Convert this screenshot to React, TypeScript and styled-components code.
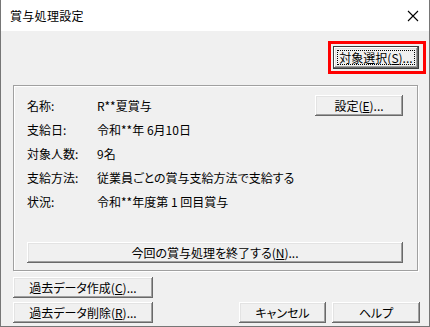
import React from "react";
import styled, { createGlobalStyle } from "styled-components";

const rows = [
  { label: "名称:", value: "R**夏賞与" },
  { label: "支給日:", value: "令和**年 6月10日" },
  { label: "対象人数:", value: "9名" },
  { label: "支給方法:", value: "従業員ごとの賞与支給方法で支給する" },
  { label: "状況:", value: "令和**年度第 1 回目賞与" },
];

function App() {
  return (
    <>
      <GlobalStyle />
      <Window>
        <TitleBar>
          <Title>賞与処理設定</Title>
          <CloseIcon width="12" height="12" viewBox="0 0 12 12">
            <path d="M1 1L11 11M11 1L1 11" stroke="#000" strokeWidth="1.1" />
          </CloseIcon>
        </TitleBar>
        <Body>
          <TopRow>
            <Highlight>
              <Button $default $width={86} $height={23}>
                <FocusRing>
                  対象選択(<u>S</u>)...
                </FocusRing>
              </Button>
            </Highlight>
          </TopRow>

          <GroupBox>
            <InfoList>
              {rows.map((row, i) => (
                <InfoRow key={row.label}>
                  <Label>{row.label}</Label>
                  <Value>{row.value}</Value>
                  {i === 0 && (
                    <Button $width={88} $height={21}>
                      設定(<u>E</u>)...
                    </Button>
                  )}
                </InfoRow>
              ))}
            </InfoList>
            <Button $width={376} $height={21}>
              今回の賞与処理を終了する(<u>N</u>)...
            </Button>
          </GroupBox>

          <Footer>
            <ButtonColumn>
              <Button $width={140} $height={21}>
                過去データ作成(<u>C</u>)...
              </Button>
              <Button $width={140} $height={21}>
                過去データ削除(<u>R</u>)...
              </Button>
            </ButtonColumn>
            <ButtonRow>
              <Button $width={87} $height={21}>
                キャンセル
              </Button>
              <Button $width={88} $height={21}>
                ヘルプ
              </Button>
            </ButtonRow>
          </Footer>
        </Body>
      </Window>
    </>
  );
}

export default App;

const GlobalStyle = createGlobalStyle`
  html, body {
    margin: 0;
    padding: 0;
    background: #ffffff;
  }
  body {
    font-family: "Noto Sans CJK JP", "Noto Sans", sans-serif;
    font-size: 12px;
    color: #000;
  }
`;

const Window = styled.div`
  box-sizing: border-box;
  width: 430px;
  height: 327px;
  border: 1px solid #767676;
  border-top: none;
  display: flex;
  flex-direction: column;
  background: #f0f0f0;
`;

const TitleBar = styled.div`
  height: 31px;
  flex: none;
  background: #ffffff;
  display: flex;
  align-items: center;
  justify-content: space-between;
  padding: 0 9px 0 9px;
`;

const Title = styled.span`
  font-size: 12px;
  letter-spacing: 0.3px;
  font-feature-settings: "palt";
`;

const CloseIcon = styled.svg`
  display: block;
  margin-right: 1px;
`;

const Body = styled.div`
  flex: 1;
  display: flex;
  flex-direction: column;
  padding: 10px 3px 3px 12px;
`;

const TopRow = styled.div`
  display: flex;
  justify-content: flex-end;
`;

const Highlight = styled.div`
  border: 3px solid #ff0000;
  padding: 2px 4px 2px 2px;
  display: flex;
`;

const Button = styled.div<{ $width: number; $height: number; $default?: boolean }>`
  box-sizing: border-box;
  width: ${(p) => p.$width}px;
  height: ${(p) => p.$height}px;
  flex: none;
  display: flex;
  align-items: center;
  justify-content: center;
  padding: ${(p) => (p.$default ? "3px" : "0")};
  background: #f0f0f0;
  font-size: 12px;
  white-space: nowrap;
  font-feature-settings: "palt";
  border: ${(p) => (p.$default ? "1px solid #3c3c3c" : "none")};
  box-shadow: inset -1px -1px #696969, inset 1px 1px #ffffff,
    inset -2px -2px #a0a0a0, inset 2px 2px #e3e3e3;

  u {
    text-underline-offset: 1px;
  }
`;

const FocusRing = styled.span`
  flex: 1;
  align-self: stretch;
  display: flex;
  align-items: center;
  justify-content: center;
  border: 1px dotted #000;
`;

const GroupBox = styled.div`
  box-sizing: border-box;
  width: 405px;
  height: 186px;
  margin-top: 11px;
  border: 1px solid #a0a0a0;
  box-shadow: inset 1px 1px #ffffff, 1px 1px #ffffff;
  padding: 7px 14px 7px 13px;
  display: flex;
  flex-direction: column;
  justify-content: space-between;
`;

const InfoList = styled.div`
  display: flex;
  flex-direction: column;
`;

const InfoRow = styled.div`
  height: 24px;
  display: flex;
  align-items: center;
`;

const Label = styled.span`
  width: 70px;
  flex: none;
  font-feature-settings: "palt";
`;

const Value = styled.span`
  flex: 1;
  font-feature-settings: "palt";
`;

const Footer = styled.div`
  margin-top: 6px;
  display: flex;
  justify-content: space-between;
  align-items: flex-end;
  padding-right: 6px;
`;

const ButtonColumn = styled.div`
  display: flex;
  flex-direction: column;
  gap: 4px;
`;

const ButtonRow = styled.div`
  display: flex;
  gap: 6px;
`;
